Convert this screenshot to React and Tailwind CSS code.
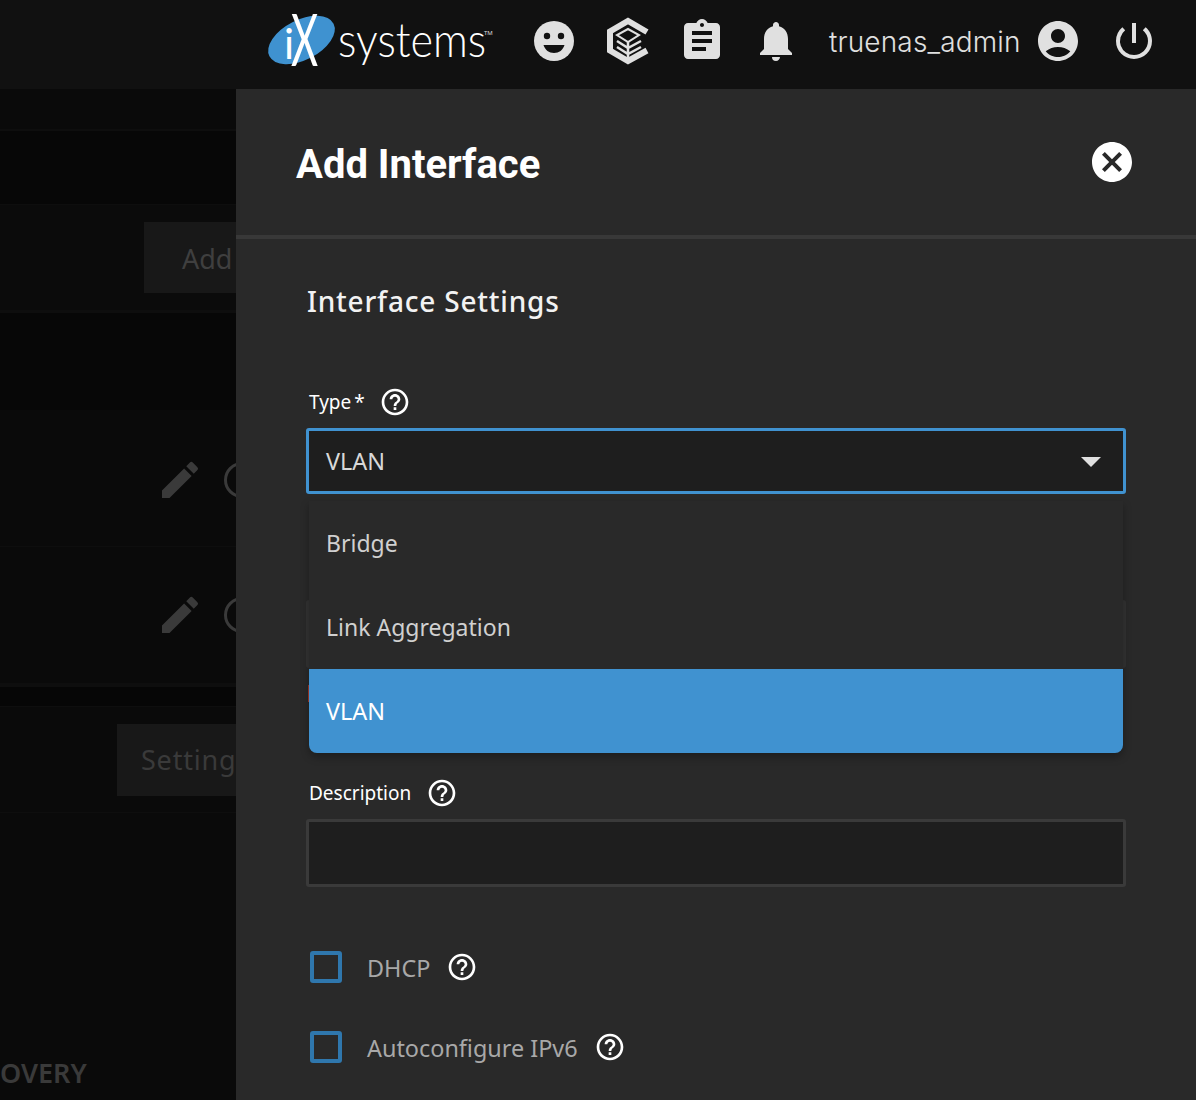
import React from 'react';
import { MdAssignment, MdNotifications, MdAccountCircle, MdPowerSettingsNew, MdEdit, MdHelpOutline, MdCancel } from 'react-icons/md';

const Help = ({ className = '' }) => <MdHelpOutline size={32} className={`text-white shrink-0 ${className}`} />;

const Logo = () => (
    <div className="flex items-center w-[226px] h-[52px]">
        <svg width="70" height="52" viewBox="0 0 70 52" className="shrink-0 overflow-visible">
            <ellipse cx="34.5" cy="25" rx="36" ry="20" transform="rotate(-27 34.5 25)" fill="#3f92d0" />
            <text x="17" y="44" fontSize="42" fontFamily="Lato" fontWeight="400" fill="#fff">i</text>
            <text x="0" y="0" fontSize="72" fontFamily="Lato" fontWeight="400" fill="#fff" transform="translate(24 51) scale(0.58 1)">X</text>
        </svg>
        <span className="ml-[1px] w-[146px] origin-left scale-x-[0.92] [font-family:Lato,sans-serif] font-light text-[47px] leading-none text-white -mt-1">systems</span>
        <span className="text-[6px] text-[#dddddd] -mt-4">TM</span>
    </div>
);

const Smiley = () => (
    <svg width="40" height="40" viewBox="0 0 40 40" className="shrink-0">
        <circle cx="20" cy="20" r="20" fill="#e0e0e0" />
        <circle cx="13" cy="15" r="3.2" fill="#111111" />
        <circle cx="27" cy="15" r="3.2" fill="#111111" />
        <path d="M9.5 24h21c-1.5 5-5.5 8-10.500 8s-9-3-10.500-8Z" fill="#111111" />
    </svg>
);

const TrueCommand = () => (
    <svg width="44" height="48" viewBox="0 0 44 48" className="shrink-0">
        <path d="M41 15 22 4 4 14.500v19L22 44l19-10.500" fill="none" stroke="#e0e0e0" strokeWidth="6" />
        <path d="M22 12 33 18 22 25 11 18Z" fill="none" stroke="#e0e0e0" strokeWidth="2" />
        <path d="M11 24l11 7 13-7M11 30l11 7 13-7M22 25V41" fill="none" stroke="#e0e0e0" strokeWidth="2.500" />
    </svg>
);

const Option = ({ label, active }) => (
    <div className={`h-[84px] pl-[17px] flex items-center ${active ? 'pt-[2px] text-[23.400px] bg-[#4092d0] text-white rounded-b-lg' : 'pt-[1px] text-[23px] text-[#d0d0d0]'}`}>
        {label}
    </div>
);

const CheckRow = ({ label, className = '' }) => (
    <div className={`flex items-center h-8 pl-[4px] ${className}`}>
        <div className="w-8 h-8 rounded-[3px] border-4 border-[#2f77ad] shrink-0"></div>
        <span className="ml-[25px] pt-[3px] text-[23.400px] text-[#a8a8a8]">{label}</span>
        <Help className="ml-[16px]" />
    </div>
);

export default function App() {
    return (
        <div className="w-[1196px] h-[1100px] overflow-hidden bg-[#0a0a0a] [font-family:'Noto_Sans',sans-serif] flex flex-col">
            {/* top bar */}
            <header className="h-[89px] shrink-0 bg-[#111111] flex items-center pl-[267px] pb-[7px]">
                <Logo />
                <div className="ml-[41px]"><Smiley /></div>
                <div className="ml-[32px]"><TrueCommand /></div>
                <MdAssignment size={48} className="text-[#e0e0e0] ml-[28px] shrink-0" />
                <MdNotifications size={48} className="text-[#e0e0e0] ml-[26px] shrink-0" />
                <span className="ml-[29px] pt-[2px] [font-family:Inter,sans-serif] font-light text-[28px] tracking-[0.15px] text-[#e0e0e0] w-[191px] whitespace-nowrap">truenas_admin</span>
                <MdAccountCircle size={48} className="text-[#e0e0e0] ml-[14px] shrink-0" />
                <MdPowerSettingsNew size={48} className="text-[#e0e0e0] ml-[28px] shrink-0" />
            </header>

            <div className="flex flex-1 min-h-0">
                {/* dimmed page behind the slide-in */}
                <div className="w-[236px] shrink-0 overflow-hidden flex flex-col">
                    <div className="h-[42px] bg-[#0a0a0a] border-b-2 border-[#0e0e0e]"></div>
                    <div className="h-[74px] bg-[#070707] border-b border-[#0e0e0e]"></div>
                    <div className="h-[108px] bg-[#0b0b0b] border-b-[3px] border-[#0e0e0e] pt-[17px] pl-[144px]">
                        <div className="w-[92px] h-[71px] bg-[#181818] flex items-center pt-[3px] pl-[38px] text-[27px] text-[#3f3f3f]">Add</div>
                    </div>
                    <div className="h-[97px] bg-[#070707]"></div>
                    <div className="h-[137px] bg-[#0a0a0a] border-b border-[#0e0e0e] flex items-center pt-[3px] pl-[156px] gap-[20px]">
                        <MdEdit size={48} className="text-[#3a3a3a] shrink-0" />
                        <div className="w-9 h-9 rounded-full border-[3px] border-[#3a3a3a] shrink-0"></div>
                    </div>
                    <div className="h-[140px] bg-[#0a0a0a] border-b-4 border-[#0e0e0e] flex items-center pl-[156px] gap-[20px]">
                        <MdEdit size={48} className="text-[#3a3a3a] shrink-0" />
                        <div className="w-9 h-9 rounded-full border-[3px] border-[#3a3a3a] shrink-0"></div>
                    </div>
                    <div className="h-[20px] bg-[#060606] border-b border-[#0e0e0e]"></div>
                    <div className="h-[106px] bg-[#0a0a0a] border-b border-[#0e0e0e] pt-[17px] pl-[117px]">
                        <div className="w-[119px] h-[72px] bg-[#181818] flex items-center pl-[24px] text-[27px] tracking-[0.8px] text-[#3a3a3a] whitespace-nowrap">Settings</div>
                    </div>
                    <div className="flex-1 bg-[#0a0a0a] flex flex-col justify-end pb-[9px]">
                        <span className="text-[27px] font-semibold text-[#3a3a3a] leading-[36px]">OVERY</span>
                    </div>
                </div>

                {/* slide-in form */}
                <div className="flex-1 bg-[#292929] flex flex-col">
                    <div className="h-[150px] shrink-0 border-b-4 border-[#383838] flex items-center justify-between pl-[60px] pr-[60px]">
                        <h1 className="pt-[5px] text-[40px] font-bold text-white [font-family:Roboto,sans-serif]">Add Interface</h1>
                        <MdCancel size={48} className="text-white shrink-0" />
                    </div>
                    <div className="pl-[70px] pr-[70px] flex flex-col">
                        <h2 className="mt-[42px] h-[40px] pl-[1px] flex items-center text-[28px] font-medium tracking-[0.8px] text-[#f2f2f2]">Interface Settings</h2>

                        <div className="mt-[65px] h-[32px] flex items-center pl-[3px] text-[19px] text-white">
                            Type<span className="ml-[3px]">*</span>
                            <Help className="ml-[14px]" />
                        </div>
                        <div className="relative mt-[10px]">
                            <div className="h-[66px] border-[3px] border-[#4092d0] rounded-[3px] bg-[#1e1e1e] flex items-center justify-between pl-[17px] pt-[2px] pr-[22px] text-[23.400px] text-[#d8d8d8]">
                                VLAN
                                <div className="w-0 h-0 border-x-[10px] border-x-transparent border-t-[10px] border-t-[#e0e0e0]"></div>
                            </div>
                            {/* open dropdown */}
                            <div className="absolute z-10 left-[3px] right-[3px] top-[73px] bg-[#292929] rounded-b-lg shadow-[0_4px_8px_rgba(0,0,0,0.3)]">
                                <Option label="Bridge" />
                                <Option label="Link Aggregation" />
                                <Option label="VLAN" active />
                            </div>
                        </div>

                        {/* field hidden under the dropdown */}
                        <div className="mt-[106px] h-[68px] border-[3px] border-[#333333] rounded-[3px]"></div>
                        <div className="mt-[17px] ml-[2px] w-[3px] h-[17px] bg-[#a33a2c]"></div>

                        <div className="mt-[75px] h-[32px] flex items-center pl-[3px] text-[19px] text-white">
                            Description
                            <Help className="ml-[15px]" />
                        </div>
                        <div className="mt-[10px] h-[68px] border-[3px] border-[#3a3a3a] rounded-[3px] bg-[#1e1e1e]"></div>

                        <CheckRow label="DHCP" className="mt-[64px]" />
                        <CheckRow label="Autoconfigure IPv6" className="mt-[48px]" />
                    </div>
                </div>
            </div>
        </div>
    );
}
